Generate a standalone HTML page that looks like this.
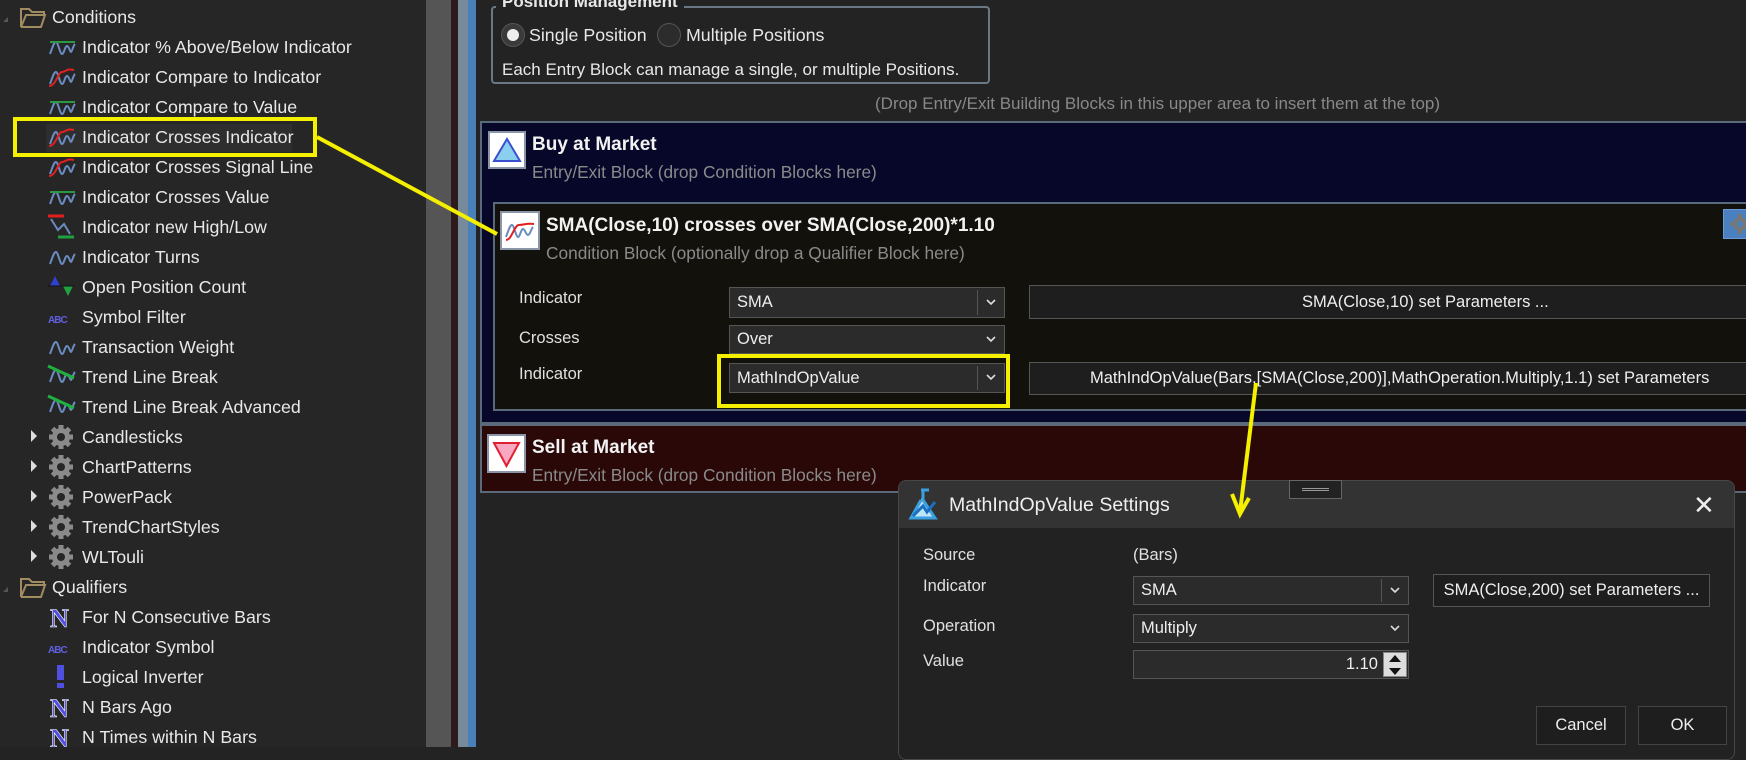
<!DOCTYPE html>
<html><head><meta charset="utf-8"><style>
*{margin:0;padding:0;box-sizing:border-box}
body{width:1746px;height:747px;overflow:hidden;background:#232323;font-family:"Liberation Sans",sans-serif;color:#e8e8e8;position:relative}
.a{position:absolute;white-space:nowrap}
.t{font-size:17.8px;line-height:20px}
.dd{position:absolute;background:#2b2b2b;border:1px solid #555;font-size:16.5px;color:#eee;padding-left:7px;display:flex;align-items:center}
.dd .dv{position:absolute;right:26px;top:2px;bottom:2px;border-left:1px solid #555}
.dd .ch{position:absolute;right:8px;top:50%;margin-top:-4px;width:10px;height:7px}
.btn{position:absolute;background:#1e1e1e;border:1px solid #555;font-size:16.5px;color:#eee;display:flex;align-items:center;justify-content:center;white-space:nowrap;overflow:hidden}
.sub{color:#8a8a8a;font-size:17.3px}
.ttl{font-weight:bold;font-size:19px;color:#f2f2f2}
.lbl{font-size:16.5px;color:#e0e0e0}
</style></head><body>
<svg width="0" height="0" style="position:absolute"><defs><symbol id="chv" viewBox="0 0 10 7"><polyline points="1,1 5,5 9,1" fill="none" stroke="#ddd" stroke-width="1.6"/></symbol></defs></svg>
<!-- left panel -->
<div class="a" style="left:0;top:0;width:426px;height:747px;background:#262626"></div>
<div class="a" style="left:426px;top:0;width:25px;height:747px;background:#555"></div>
<div class="a" style="left:451px;top:0;width:7px;height:747px;background:#2e1a1a"></div>
<div class="a" style="left:458px;top:0;width:10px;height:747px;background:#768a9c"></div>
<div class="a" style="left:468px;top:0;width:8px;height:747px;background:#4a80b8"></div>
<div class="a" style="left:46px;top:124px;width:246px;height:28px;background:#2e2e2e"></div>

<svg class="a" style="left:0;top:0" width="426" height="747">
<defs>
<g id="wv"><path d="M2,18 C5,10 6,6 8,6 C10,6 12,18 14,18 C16,18 17,10 19,10 C21,10 22,16 23,16 C24,16 25,10 27,8" fill="none" stroke="#6a8cc0" stroke-width="2"/></g>
<g id="wvg"><use href="#wv"/><line x1="2" y1="6" x2="27" y2="6" stroke="#2a9a40" stroke-width="2"/></g>
<g id="wvr"><use href="#wv"/><path d="M1,20 C8,20 10,6 14,6 C18,6 18,2 26,4" fill="none" stroke="#e02020" stroke-width="2"/></g>
<g id="gear"><circle cx="13" cy="12" r="9" fill="#8a8a8a"/><g stroke="#8a8a8a" stroke-width="5"><line x1="13" y1="0" x2="13" y2="24"/><line x1="1" y1="12" x2="25" y2="12"/><line x1="4.5" y1="3.5" x2="21.5" y2="20.5"/><line x1="21.5" y1="3.5" x2="4.5" y2="20.5"/></g><circle cx="13" cy="12" r="4" fill="#262626"/></g>
<g id="fold"><path d="M2,4 h8 l3,3 h12 v3 H7 L2,22 Z M7,10 H26 L22,22 H2" fill="none" stroke="#a08c60" stroke-width="2"/></g>
<g id="N"><text x="2" y="22" font-family="Liberation Serif" font-weight="bold" font-size="26" fill="#5050e0" stroke="#fff" stroke-width="0.6">N</text></g>
<g id="abc"><text x="0" y="17" font-family="Liberation Sans" font-weight="bold" font-size="10" fill="#6060e0" letter-spacing="-1">ABC</text></g>
</defs>
<path d="M3,22 L8,17 L8,22Z" fill="#555"/>
<use href="#fold" x="19" y="5"/>
<use href="#wvg" x="48" y="36"/>
<use href="#wvr" x="48" y="66"/>
<use href="#wvg" x="48" y="96"/>
<use href="#wvr" x="48" y="126"/>
<use href="#wvr" x="48" y="156"/>
<use href="#wvg" x="48" y="186"/>
<g transform="translate(48,214)"><line x1="0" y1="2" x2="16" y2="2" stroke="#e02020" stroke-width="3"/><polyline points="3,5 10,16 16,10 22,20" fill="none" stroke="#6a8cc0" stroke-width="2"/><line x1="10" y1="23" x2="26" y2="23" stroke="#20a040" stroke-width="3"/></g>
<use href="#wv" x="48" y="246"/>
<g transform="translate(48,274)"><path d="M2,12 L7,2 L12,12Z" fill="#3040d0"/><path d="M15,12 L25,12 L20,22Z" fill="#20a040"/><line x1="0" y1="12" x2="26" y2="12" stroke="#111" stroke-width="1"/></g>
<use href="#abc" x="48" y="306"/>
<use href="#wv" x="48" y="336"/>
<g transform="translate(48,364)"><use href="#wv"/><line x1="0" y1="2" x2="26" y2="14" stroke="#20b040" stroke-width="3"/></g>
<g transform="translate(48,394)"><use href="#wv"/><line x1="0" y1="2" x2="26" y2="14" stroke="#20b040" stroke-width="3"/></g>
<g fill="#ddd"><path d="M31,430 l6,6 -6,6Z"/><path d="M31,460 l6,6 -6,6Z"/><path d="M31,490 l6,6 -6,6Z"/><path d="M31,520 l6,6 -6,6Z"/><path d="M31,550 l6,6 -6,6Z"/></g>
<use href="#gear" x="48" y="425"/><use href="#gear" x="48" y="455"/><use href="#gear" x="48" y="485"/><use href="#gear" x="48" y="515"/><use href="#gear" x="48" y="545"/>
<path d="M3,592 L8,587 L8,592Z" fill="#555"/>
<use href="#fold" x="19" y="575"/>
<use href="#N" x="48" y="605"/>
<use href="#abc" x="48" y="636"/>
<rect x="57" y="665" width="7" height="15" fill="#5050e0"/><rect x="57" y="683" width="7" height="5" fill="#5050e0"/>
<use href="#N" x="48" y="695"/>
<use href="#N" x="48" y="725"/>
</svg>

<div class="a t" style="left:52px;top:7px">Conditions</div>
<div class="a t" style="left:82px;top:37px">Indicator % Above/Below Indicator</div>
<div class="a t" style="left:82px;top:67px">Indicator Compare to Indicator</div>
<div class="a t" style="left:82px;top:97px">Indicator Compare to Value</div>
<div class="a t" style="left:82px;top:127px">Indicator Crosses Indicator</div>
<div class="a t" style="left:82px;top:157px">Indicator Crosses Signal Line</div>
<div class="a t" style="left:82px;top:187px">Indicator Crosses Value</div>
<div class="a t" style="left:82px;top:217px">Indicator new High/Low</div>
<div class="a t" style="left:82px;top:247px">Indicator Turns</div>
<div class="a t" style="left:82px;top:277px">Open Position Count</div>
<div class="a t" style="left:82px;top:307px">Symbol Filter</div>
<div class="a t" style="left:82px;top:337px">Transaction Weight</div>
<div class="a t" style="left:82px;top:367px">Trend Line Break</div>
<div class="a t" style="left:82px;top:397px">Trend Line Break Advanced</div>
<div class="a t" style="left:82px;top:427px">Candlesticks</div>
<div class="a t" style="left:82px;top:457px">ChartPatterns</div>
<div class="a t" style="left:82px;top:487px">PowerPack</div>
<div class="a t" style="left:82px;top:517px">TrendChartStyles</div>
<div class="a t" style="left:82px;top:547px">WLTouli</div>
<div class="a t" style="left:52px;top:577px">Qualifiers</div>
<div class="a t" style="left:82px;top:607px">For N Consecutive Bars</div>
<div class="a t" style="left:82px;top:637px">Indicator Symbol</div>
<div class="a t" style="left:82px;top:667px">Logical Inverter</div>
<div class="a t" style="left:82px;top:697px">N Bars Ago</div>
<div class="a t" style="left:82px;top:727px">N Times within N Bars</div>

<!-- position management -->
<div class="a" style="left:491px;top:6px;width:499px;height:78px;border:2px solid #6a7886;border-radius:4px"></div>
<div class="a" style="left:496px;top:-8px;background:#232323;padding:0 6px;font-weight:bold;font-size:17px">Position Management</div>
<div class="a" style="left:501px;top:23px;width:24px;height:24px;border-radius:50%;background:#3a3a3a;border:1px solid #555"><div style="position:absolute;left:5px;top:5px;width:12px;height:12px;border-radius:50%;background:#eee"></div></div>
<div class="a t" style="left:529px;top:25px">Single Position</div>
<div class="a" style="left:657px;top:23px;width:24px;height:24px;border-radius:50%;background:#2c2c2c;border:1px solid #555"></div>
<div class="a t" style="left:686px;top:25px">Multiple Positions</div>
<div class="a" style="left:502px;top:60px;font-size:17px">Each Entry Block can manage a single, or multiple Positions.</div>
<div class="a" style="left:875px;top:94px;font-size:17px;color:#888">(Drop Entry/Exit Building Blocks in this upper area to insert them at the top)</div>

<!-- buy block -->
<div class="a" style="left:480px;top:121px;width:1270px;height:303px;background:#07072a;border:2px solid #5a6a7a"></div>
<svg class="a" style="left:488px;top:131px" width="38" height="38"><rect x="1" y="1" width="36" height="36" fill="#fff" stroke="#8a96a8" stroke-width="2"/><path d="M19,8 L32,30 L6,30Z" fill="#8ad0ee" stroke="#3a50d0" stroke-width="2"/></svg>
<div class="a ttl" style="left:532px;top:134px">Buy at Market</div>
<div class="a sub" style="left:532px;top:162px">Entry/Exit Block (drop Condition Blocks here)</div>

<!-- condition block -->
<div class="a" style="left:493px;top:202px;width:1260px;height:209px;background:#13110b;border:2px solid #5a6a7a"></div>
<svg class="a" style="left:500px;top:211px" width="40" height="39"><rect x="1" y="1" width="38" height="37" fill="#fff" stroke="#8a96a8" stroke-width="2"/><path d="M6,26 C9,18 10,14 12,14 C14,14 16,26 18,26 C20,26 21,18 23,18 C25,18 26,24 28,24 C30,24 31,18 33,16" fill="none" stroke="#6a8cc0" stroke-width="2"/><path d="M6,29 C12,29 14,14 19,14 C24,14 26,12 34,13" fill="none" stroke="#e02020" stroke-width="2"/></svg>
<div class="a ttl" style="left:546px;top:215px">SMA(Close,10) crosses over SMA(Close,200)*1.10</div>
<div class="a sub" style="left:546px;top:243px">Condition Block (optionally drop a Qualifier Block here)</div>
<div class="a lbl" style="left:519px;top:289px">Indicator</div>
<div class="a lbl" style="left:519px;top:329px">Crosses</div>
<div class="a lbl" style="left:519px;top:365px">Indicator</div>
<div class="dd" style="left:729px;top:287px;width:276px;height:31px">SMA<span class="dv"></span><svg class="ch"><use href="#chv"/></svg></div>
<div class="dd" style="left:729px;top:325px;width:276px;height:29px">Over<svg class="ch"><use href="#chv"/></svg></div>
<div class="dd" style="left:729px;top:363px;width:276px;height:30px">MathIndOpValue<span class="dv"></span><svg class="ch"><use href="#chv"/></svg></div>
<div class="a" style="left:717px;top:354px;width:293px;height:54px;border:4px solid #f5ef00"></div>
<div class="btn" style="left:1029px;top:285px;width:740px;height:34px;justify-content:flex-start;padding-left:272px">SMA(Close,10) set Parameters ...</div>
<div class="btn" style="left:1029px;top:362px;width:740px;height:33px;justify-content:flex-start;padding-left:60px">MathIndOpValue(Bars,[SMA(Close,200)],MathOperation.Multiply,1.1) set Parameters</div>
<div class="a" style="left:1723px;top:209px;width:30px;height:30px;background:#4a80c0;border:1px solid #6a9ad0"></div>
<svg class="a" style="left:1730px;top:214px" width="20" height="20"><circle cx="10" cy="10" r="7" fill="#777"/><g stroke="#777" stroke-width="4"><line x1="10" y1="0" x2="10" y2="20"/><line x1="0" y1="10" x2="20" y2="10"/></g><circle cx="10" cy="10" r="3" fill="#4a80c0"/></svg>

<!-- sell -->
<div class="a" style="left:480px;top:424px;width:1270px;height:69px;background:#2a0808;border:2px solid #5a6a7a"></div>
<svg class="a" style="left:487px;top:434px" width="39" height="39"><rect x="1" y="1" width="37" height="37" fill="#fff" stroke="#8a96a8" stroke-width="2"/><path d="M7,9 L32,9 L19.5,32Z" fill="#f8a8c0" stroke="#e02030" stroke-width="2"/></svg>
<div class="a ttl" style="left:532px;top:437px">Sell at Market</div>
<div class="a sub" style="left:532px;top:465px">Entry/Exit Block (drop Condition Blocks here)</div>

<!-- dialog -->
<div class="a" style="left:898px;top:480px;width:837px;height:280px;background:#222;border:1px solid #484848;border-radius:8px;overflow:hidden">
 <div style="position:absolute;left:0;top:0;right:0;height:47px;background:#333"></div>
</div>
<div class="a" style="left:1289px;top:480px;width:53px;height:19px;background:#222;border:1px solid #666"><div style="position:absolute;left:12px;right:12px;top:7px;height:3px;border-top:1px solid #999;border-bottom:1px solid #999"></div></div>
<svg class="a" style="left:905px;top:488px" width="36" height="34"><path d="M16,2 h8 M18,2 v10 L30,30 H6 L16,12" fill="#bfe6f8" stroke="#3aa0e0" stroke-width="3"/><path d="M8,28 L18,18 L22,24 L30,14" fill="none" stroke="#1a70c0" stroke-width="3"/></svg>
<div class="a" style="left:949px;top:494px;font-size:19.5px;color:#eee">MathIndOpValue Settings</div>
<div class="a" style="left:1693px;top:490px;font-size:26px;color:#eee">&#10005;</div>
<div class="a lbl" style="left:923px;top:546px">Source</div>
<div class="a lbl" style="left:923px;top:577px">Indicator</div>
<div class="a lbl" style="left:923px;top:617px">Operation</div>
<div class="a lbl" style="left:923px;top:652px">Value</div>
<div class="a lbl" style="left:1133px;top:546px">(Bars)</div>
<div class="dd" style="left:1133px;top:576px;width:276px;height:29px">SMA<span class="dv"></span><svg class="ch"><use href="#chv"/></svg></div>
<div class="dd" style="left:1133px;top:614px;width:276px;height:29px">Multiply<svg class="ch"><use href="#chv"/></svg></div>
<div class="dd" style="left:1133px;top:650px;width:276px;height:29px;justify-content:flex-end;padding-right:30px">1.10</div>
<div class="a" style="left:1383px;top:652px;width:24px;height:25px;background:#ddd;border:1px solid #888"><div style="position:absolute;left:5px;top:2px;border:6px solid transparent;border-bottom:7px solid #111;border-top:0"></div><div style="position:absolute;left:5px;top:15px;border:6px solid transparent;border-top:7px solid #111;border-bottom:0"></div></div>
<div class="btn" style="left:1433px;top:574px;width:277px;height:33px">SMA(Close,200) set Parameters ...</div>
<div class="btn" style="left:1536px;top:706px;width:90px;height:39px;border-color:#444">Cancel</div>
<div class="btn" style="left:1638px;top:706px;width:89px;height:39px;border-color:#444">OK</div>

<!-- annotation -->
<div class="a" style="left:13px;top:117px;width:304px;height:40px;border:4px solid #f5ef00"></div>
<svg class="a" style="left:0;top:0" width="1746" height="747">
<line x1="317" y1="137" x2="497" y2="234" stroke="#f5ef00" stroke-width="4"/>
<line x1="1256" y1="383" x2="1240" y2="512" stroke="#f5ef00" stroke-width="4"/>
<path d="M1232,494 L1240,514 L1249,498" fill="none" stroke="#f5ef00" stroke-width="4"/>
</svg>
</body></html>
